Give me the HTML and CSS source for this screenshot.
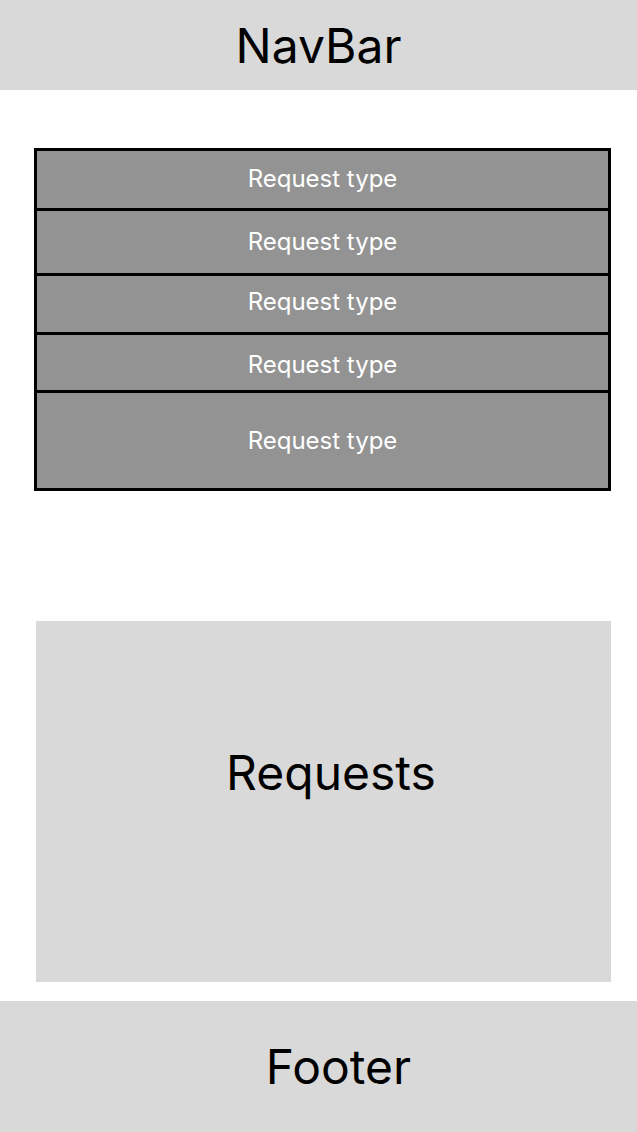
FILE: index.html
```html
<!DOCTYPE html>
<html lang="en">
<head>
<meta charset="utf-8">
<title>Requests</title>
<link rel="stylesheet" href="styles.css">
</head>
<body>
<header class="navbar">NavBar</header>
<main class="content">
  <ul class="type-list">
    <li class="type-row row-1">Request type</li>
    <li class="type-row row-2">Request type</li>
    <li class="type-row row-3">Request type</li>
    <li class="type-row row-4">Request type</li>
    <li class="type-row row-5">Request type</li>
  </ul>
  <section class="requests">Requests</section>
</main>
<footer class="footer">Footer</footer>
</body>
</html>
```
FILE: styles.css
```css
* { box-sizing: border-box; }
html, body { margin: 0; padding: 0; }
body {
  font-family: Inter, "Noto Sans", sans-serif;
  background: #ffffff;
  color: #000000;
  width: 637px;
}
.navbar {
  height: 90px;
  background: #d9d9d9;
  display: flex;
  align-items: center;
  justify-content: center;
  font-size: 48px;
  line-height: 1;
  padding-top: 2px;
}
.content {
  display: flex;
  flex-direction: column;
}
.type-list {
  list-style: none;
  margin: 58px 0 0 34px;
  padding: 0;
  width: 577px;
  border: 3px solid #000;
  background: #939393;
}
.type-row {
  display: flex;
  align-items: center;
  justify-content: center;
  color: #ffffff;
  font-size: 24px;
  font-weight: 400;
  line-height: 1;
}
.type-row + .type-row { border-top: 3px solid #000; }
.row-1 { height: 57px; padding-bottom: 1px; }
.row-2 { height: 65px; }
.row-3 { height: 59px; padding-bottom: 4px; }
.row-4 { height: 58px; padding-top: 4px; }
.row-5 { height: 98px; }
.requests {
  margin: 130px 0 0 36px;
  width: 575px;
  height: 361px;
  background: #d9d9d9;
  display: flex;
  align-items: center;
  justify-content: center;
  font-size: 48px;
  line-height: 1;
  padding: 0 0 57px 15px;
}
.footer {
  margin-top: 19px;
  height: 131px;
  background: #d9d9d9;
  display: flex;
  align-items: center;
  justify-content: center;
  font-size: 48px;
  line-height: 1;
  padding-left: 40px;
}
```
